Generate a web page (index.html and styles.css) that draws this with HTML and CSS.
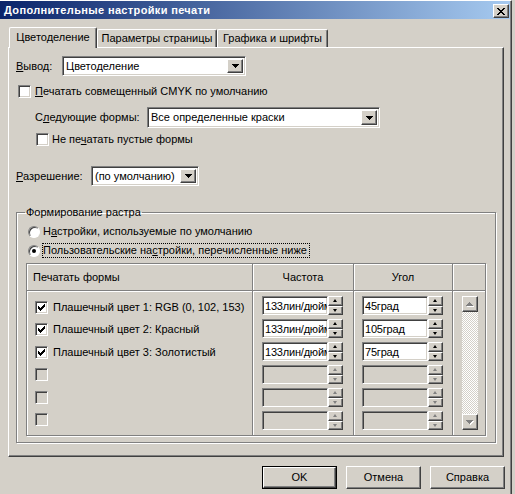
FILE: index.html
```html
<!DOCTYPE html>
<html lang="ru">
<head>
<meta charset="utf-8">
<title>Дополнительные настройки печати</title>
<link rel="stylesheet" href="styles.css">
</head>
<body>
<div class="window">
  <div class="titlebar">
    <span class="title">Дополнительные настройки печати</span>
    <span class="close-btn"><svg width="8" height="7" viewBox="0 0 8 7" shape-rendering="crispEdges"><path d="M0 0h2v1H0z M6 0h2v1H6z M1 1h2v1H1z M5 1h2v1H5z M2 2h4v1H2z M3 3h2v1H3z M2 4h4v1H2z M1 5h2v1H1z M5 5h2v1H5z M0 6h2v1H0z M6 6h2v1H6z" fill="#000"/></svg></span>
  </div>

  <div class="tabs">
    <div class="tab active">Цветоделение</div>
    <div class="tab t2">Параметры страницы</div>
    <div class="tab t3">Графика и шрифты</div>
  </div>

  <div class="panel">
    <div class="row r-output">
      <span class="lbl w46"><u>В</u>ывод:</span>
      <div class="select w184 h20"><span class="sel-text">Цветоделение</span><span class="dd-btn"><svg width="7" height="4" viewBox="0 0 7 4" shape-rendering="crispEdges"><path d="M0 0h7v1H6v1H5v1H4v1H3V3H2V2H1V1H0z"/></svg></span></div>
    </div>

    <div class="row r-cmyk">
      <span class="cb"></span><span class="cb-text"><u>П</u>ечатать совмещенный CMYK по умолчанию</span>
    </div>

    <div class="row r-forms">
      <span class="lbl w112">С<u>л</u>едующие формы:</span>
      <div class="select w233 h21"><span class="sel-text">Все определенные краски</span><span class="dd-btn"><svg width="7" height="4" viewBox="0 0 7 4" shape-rendering="crispEdges"><path d="M0 0h7v1H6v1H5v1H4v1H3V3H2V2H1V1H0z"/></svg></span></div>
    </div>

    <div class="row r-empty">
      <span class="cb"></span><span class="cb-text2">Не пе<u>ч</u>атать пустые формы</span>
    </div>

    <div class="row r-res">
      <span class="lbl w75"><u>Р</u>азрешение:</span>
      <div class="select w108 h20"><span class="sel-text">(по умолчанию)</span><span class="dd-btn"><svg width="7" height="4" viewBox="0 0 7 4" shape-rendering="crispEdges"><path d="M0 0h7v1H6v1H5v1H4v1H3V3H2V2H1V1H0z"/></svg></span></div>
    </div>

    <fieldset class="group">
      <legend>Формирование растра</legend>
      <div class="radio-row first">
        <span class="radio"></span><span class="radio-text">Н<u>а</u>стройки, используемые по умолчанию</span>
      </div>
      <div class="radio-row second">
        <span class="radio"><span class="dot"></span></span><span class="radio-text focus">Пользовательские на<u>с</u>тройки, перечисленные ниже</span>
      </div>

      <div class="grid">
        <div class="hcell c1">Печатать формы</div>
        <div class="hcell c2 center">Частота</div>
        <div class="hcell c3 center">Угол</div>
        <div class="hcell c4"></div>

        <div class="bcell c1 col-names">
          <div class="name-row"><span class="cb checked"><svg width="7" height="7" viewBox="0 0 7 7" shape-rendering="crispEdges"><path d="M0 2h1v3H0z M1 3h1v3H1z M2 4h1v3H2z M3 3h1v3H3z M4 2h1v3H4z M5 1h1v3H5z M6 0h1v3H6z"/></svg></span><span class="name-text">Плашечный цвет 1: RGB (0, 102, 153)</span></div>
          <div class="name-row"><span class="cb checked"><svg width="7" height="7" viewBox="0 0 7 7" shape-rendering="crispEdges"><path d="M0 2h1v3H0z M1 3h1v3H1z M2 4h1v3H2z M3 3h1v3H3z M4 2h1v3H4z M5 1h1v3H5z M6 0h1v3H6z"/></svg></span><span class="name-text">Плашечный цвет 2: Красный</span></div>
          <div class="name-row"><span class="cb checked"><svg width="7" height="7" viewBox="0 0 7 7" shape-rendering="crispEdges"><path d="M0 2h1v3H0z M1 3h1v3H1z M2 4h1v3H2z M3 3h1v3H3z M4 2h1v3H4z M5 1h1v3H5z M6 0h1v3H6z"/></svg></span><span class="name-text">Плашечный цвет 3: Золотистый</span></div>
          <div class="name-row"><span class="cb disabled"></span></div>
          <div class="name-row"><span class="cb disabled"></span></div>
          <div class="name-row"><span class="cb disabled"></span></div>
        </div>

        <div class="bcell c2 col-spins">
          <div class="spin"><div class="field">133лин/дюйм</div><div class="spin-btns"><span class="sb up"></span><span class="sb down"></span></div></div>
          <div class="spin"><div class="field">133лин/дюйм</div><div class="spin-btns"><span class="sb up"></span><span class="sb down"></span></div></div>
          <div class="spin"><div class="field">133лин/дюйм</div><div class="spin-btns"><span class="sb up"></span><span class="sb down"></span></div></div>
          <div class="spin off"><div class="field"></div><div class="spin-btns"><span class="sb up"></span><span class="sb down"></span></div></div>
          <div class="spin off"><div class="field"></div><div class="spin-btns"><span class="sb up"></span><span class="sb down"></span></div></div>
          <div class="spin off"><div class="field"></div><div class="spin-btns"><span class="sb up"></span><span class="sb down"></span></div></div>
        </div>

        <div class="bcell c3 col-spins col-angle">
          <div class="spin"><div class="field">45град</div><div class="spin-btns"><span class="sb up"></span><span class="sb down"></span></div></div>
          <div class="spin"><div class="field">105град</div><div class="spin-btns"><span class="sb up"></span><span class="sb down"></span></div></div>
          <div class="spin"><div class="field">75град</div><div class="spin-btns"><span class="sb up"></span><span class="sb down"></span></div></div>
          <div class="spin off"><div class="field"></div><div class="spin-btns"><span class="sb up"></span><span class="sb down"></span></div></div>
          <div class="spin off"><div class="field"></div><div class="spin-btns"><span class="sb up"></span><span class="sb down"></span></div></div>
          <div class="spin off"><div class="field"></div><div class="spin-btns"><span class="sb up"></span><span class="sb down"></span></div></div>
        </div>

        <div class="bcell c4 col-scroll">
          <div class="scrollbar">
            <span class="scr-btn"><svg width="8" height="5" viewBox="0 0 8 5" shape-rendering="crispEdges"><path d="M4 1h1v1h1v1h1v1h1v1H1V4h1V3h1V2h1z" fill="#fff"/><path d="M3 0h1v1h1v1h1v1h1v1H0V3h1V2h1V1h1z" fill="#808080"/></svg></span>
            <span class="track"></span>
            <span class="scr-btn"><svg width="8" height="5" viewBox="0 0 8 5" shape-rendering="crispEdges"><path d="M1 1h7v1H7v1H6v1H5v1H4V4H3V3H2V2H1z" fill="#fff"/><path d="M0 0h7v1H6v1H5v1H4v1H3V3H2V2H1V1H0z" fill="#808080"/></svg></span>
          </div>
        </div>
      </div>
    </fieldset>
  </div>

  <div class="buttons">
    <span class="btn default"><span class="btn-in">OK</span></span>
    <span class="btn"><span class="btn-in">Отмена</span></span>
    <span class="btn"><span class="btn-in">Справка</span></span>
  </div>
</div>
</body>
</html>
```

FILE: styles.css
```css
* { box-sizing: border-box; }
html, body { margin: 0; padding: 0; }
body {
  width: 515px;
  height: 494px;
  overflow: hidden;
  background: #D4D0C8;
  font-family: "Liberation Sans", Arial, sans-serif;
  font-size: 11px;
  line-height: 13px;
  color: #000;
}
u { text-decoration: underline; text-underline-offset: 1px; }

.window {
  width: 512px;
  height: 494px;
  background: #D4D0C8;
  border-top: 1px solid #fff;
  border-right: 1px solid #404040;
  box-shadow: inset -1px 0 #808080;
}

.titlebar {
  height: 18px;
  width: 510px;
  display: flex;
  align-items: center;
  justify-content: space-between;
  background: linear-gradient(to right, #0A246A, #A6CAF0);
  padding: 0 1px 0 4px;
}
.title { color: #fff; font-weight: bold; font-size: 11px; letter-spacing: 0.35px; }
.close-btn {
  width: 16px;
  height: 14px;
  background: #D4D0C8;
  border: 1px solid;
  border-color: #fff #404040 #404040 #fff;
  box-shadow: inset -1px -1px #808080;
  display: flex;
  align-items: center;
  justify-content: center;
  margin-top: 2px;
}

.tabs {
  display: flex;
  align-items: flex-end;
  height: 20px;
  margin: 8px 0 0 9px;
}
.tab {
  height: 18px;
  border: 1px solid;
  border-bottom: none;
  border-color: #fff #404040 #fff #fff;
  box-shadow: inset -1px 0 #808080;
  border-radius: 2px 2px 0 0;
  display: flex;
  align-items: center;
  justify-content: center;
  background: #D4D0C8;
}
.tab.active {
  width: 88px;
  height: 21px;
  margin-bottom: -1px;
  position: relative;
  z-index: 1;
  padding-bottom: 1px;
}
.tab.t2 { width: 120px; }
.tab.t3 { width: 111px; }

.panel {
  margin-left: 8px;
  width: 496px;
  height: 410px;
  border: 1px solid;
  border-color: #fff #404040 #404040 #fff;
  box-shadow: inset -1px -1px #808080;
}

.row { display: flex; align-items: center; }
.lbl { flex: none; }
.w46 { width: 46px; }
.w112 { width: 112px; }
.w75 { width: 75px; }

.r-output { margin-top: 8px; padding-left: 7px; }
.r-cmyk { margin-top: 9px; padding-left: 9px; }
.r-forms { margin-top: 9px; padding-left: 26px; }
.r-empty { margin-top: 5px; padding-left: 27px; }
.r-res { margin-top: 20px; padding-left: 7px; }

.select {
  display: flex;
  align-items: center;
  justify-content: space-between;
  background: #fff;
  border: 1px solid;
  border-color: #808080 #fff #fff #808080;
  box-shadow: inset 1px 1px #404040, inset -1px -1px #D4D0C8;
  padding: 2px 2px 2px 3px;
}
.w184 { width: 184px; }
.w233 { width: 233px; }
.w108 { width: 108px; }
.h20 { height: 20px; }
.h21 { height: 21px; }
.sel-text { white-space: nowrap; }
.dd-btn {
  width: 16px;
  height: 100%;
  flex: none;
  background: #D4D0C8;
  border: 1px solid;
  border-color: #fff #404040 #404040 #fff;
  box-shadow: inset -1px -1px #808080;
  display: flex;
  align-items: center;
  justify-content: center;
}

.cb {
  flex: none;
  width: 13px;
  height: 13px;
  background: #fff;
  border: 1px solid;
  border-color: #808080 #fff #fff #808080;
  box-shadow: inset 1px 1px #404040, inset -1px -1px #D4D0C8;
  display: flex;
  align-items: center;
  justify-content: center;
}
.cb.disabled { background: #D4D0C8; }
.cb-text { margin-left: 4px; white-space: nowrap; }
.cb-text2 { margin-left: 3px; white-space: nowrap; }

.group {
  margin: 20px 0 0 7px;
  width: 480px;
  padding: 0 0 6px 0;
  border: 1px solid #808080;
  box-shadow: inset 1px 1px #fff, 1px 1px #fff;
  min-width: 0;
}
.group legend {
  margin-left: 8px;
  padding: 0 1px;
  line-height: 13px;
}

.radio-row {
  display: flex;
  align-items: center;
  height: 15px;
  padding-left: 11px;
}
.radio-row.first { margin-top: 5px; }
.radio-row.second { margin-top: 4px; }
.radio {
  flex: none;
  width: 12px;
  height: 12px;
  border-radius: 50%;
  background: #fff;
  border: 1px solid;
  border-color: #808080 #fff #fff #808080;
  box-shadow: inset 1px 1px #404040;
  display: flex;
  align-items: center;
  justify-content: center;
}
.dot { width: 4px; height: 4px; border-radius: 50%; background: #000; }
.radio-text { margin-left: 3px; white-space: nowrap; }
.radio-text.focus { border: 1px dotted #000; padding: 0 2px 0 0; margin-left: 2px; }

.grid {
  margin: 5px 0 0 9px;
  width: 460px;
  height: 173px;
  border: 1px solid #808080;
  box-shadow: inset 1px 1px #fff, 1px 1px #fff;
  display: grid;
  grid-template-columns: 226px 101px 99px 32px;
  grid-template-rows: 27px 1fr;
}
.hcell {
  border-bottom: 1px solid #808080;
  border-right: 1px solid #808080;
  box-shadow: inset 1px 1px #fff;
  display: flex;
  align-items: center;
  padding-left: 6px;
}
.hcell.center { justify-content: center; padding-left: 0; }
.hcell.c4, .bcell.c4 { border-right: none; }
.bcell {
  border-right: 1px solid #808080;
  box-shadow: inset 1px 1px #fff;
  padding-top: 5px;
}

.col-names { padding-left: 8px; }
.name-row {
  height: 22.5px;
  display: flex;
  align-items: center;
}
.name-text { margin-left: 5px; white-space: nowrap; }

.col-spins {
  padding-left: 9px;
  display: flex;
  flex-direction: column;
  gap: 4px;
}
.col-angle { padding-left: 8px; }
.spin { display: flex; height: 19px; }
.field {
  width: 66px;
  height: 19px;
  background: #fff;
  border: 1px solid;
  border-color: #808080 #fff #fff #808080;
  box-shadow: inset 1px 1px #404040, inset -1px -1px #D4D0C8;
  padding: 2px 0 0 2px;
  white-space: nowrap;
  overflow: hidden;
  font-size: 11px;
  line-height: 14px;
  letter-spacing: -0.2px;
}
.spin.off .field { background: #D4D0C8; }
.spin-btns { display: flex; flex-direction: column; width: 15px; }
.sb {
  display: block;
  background: #D4D0C8;
  border: 1px solid;
  border-color: #fff #404040 #404040 #fff;
  box-shadow: inset -1px -1px #808080;
  position: relative;
}
.sb.up { height: 10px; }
.sb.down { height: 9px; }
.sb::after {
  content: "";
  position: absolute;
  left: 4px;
  width: 0;
  height: 0;
  border-left: 2.5px solid transparent;
  border-right: 2.5px solid transparent;
}
.sb.up::after { top: 2px; border-bottom: 3px solid #000; }
.sb.down::after { top: 2px; border-top: 3px solid #000; }
.spin.off .sb.up::after { border-bottom-color: #808080; }
.spin.off .sb.down::after { border-top-color: #808080; }

.col-scroll { padding-left: 9px; }
.scrollbar {
  width: 16px;
  height: 134px;
  display: flex;
  flex-direction: column;
}
.scr-btn {
  flex: none;
  height: 16px;
  background: #D4D0C8;
  border: 1px solid;
  border-color: #fff #404040 #404040 #fff;
  box-shadow: inset -1px -1px #808080;
  display: flex;
  align-items: center;
  justify-content: center;
}
.track {
  flex: 1;
  background: repeating-conic-gradient(#fff 0 25%, #D4D0C8 0 50%) 0 0 / 2px 2px;
}

.buttons {
  display: flex;
  justify-content: flex-end;
  gap: 9px;
  margin-top: 9px;
  width: 505px;
}
.btn {
  width: 75px;
  height: 23px;
  display: flex;
  border: 1px solid;
  border-color: #fff #404040 #404040 #fff;
  box-shadow: inset -1px -1px #808080;
}
.btn-in {
  flex: 1;
  display: flex;
  align-items: center;
  justify-content: center;
}
.btn.default {
  border: 1px solid #000;
  box-shadow: none;
}
.btn.default .btn-in {
  border: 1px solid;
  border-color: #fff #404040 #404040 #fff;
  box-shadow: inset -1px -1px #808080;
}
```
